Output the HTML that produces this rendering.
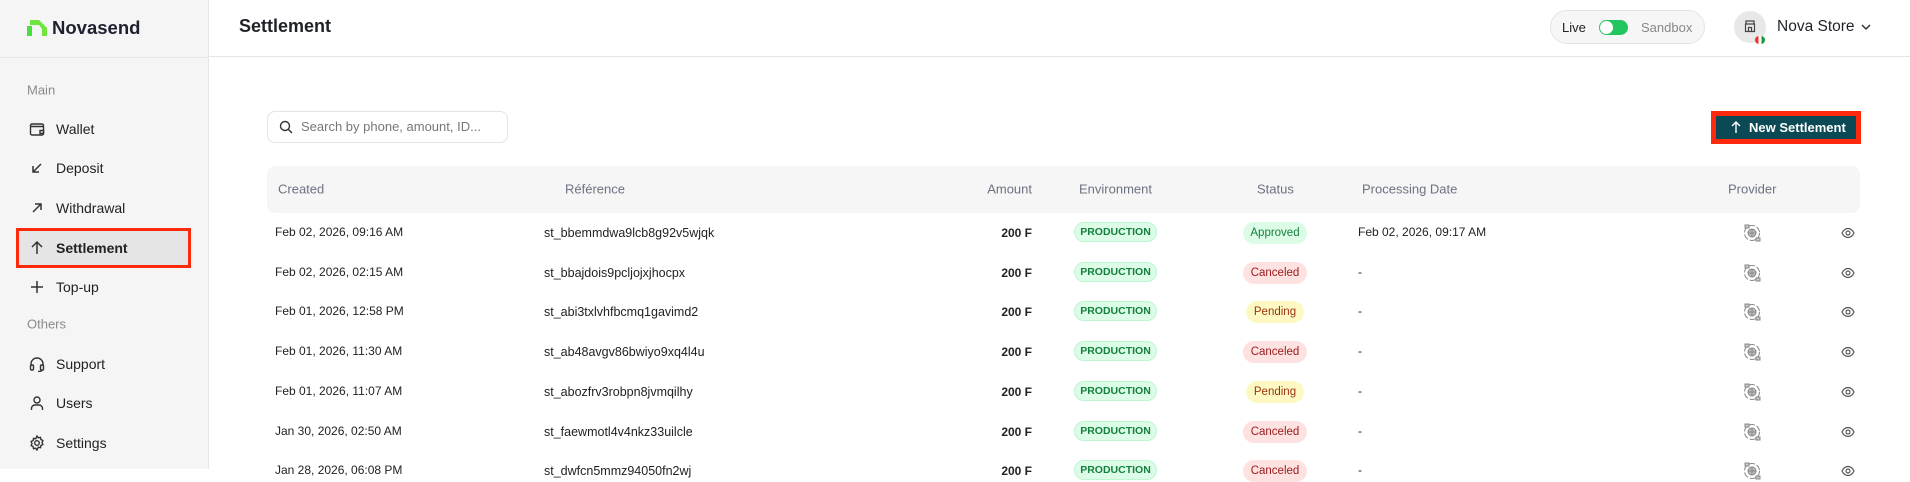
<!DOCTYPE html>
<html><head><meta charset="utf-8"><style>
*{box-sizing:border-box;margin:0;padding:0}
body{width:1910px;height:469px;overflow:hidden;background:#fff;font-family:"Liberation Sans",sans-serif;color:#1f2328;position:relative}
.a{position:absolute;white-space:nowrap}
.side{left:0;top:0;width:209px;height:469px;background:#f5f5f5;border-right:1px solid #e6e6e6}
.hdr{left:209px;top:0;right:0;height:57px;border-bottom:1px solid #e5e5e5;background:#fff}
.hline{left:0;top:57px;width:209px;height:1px;background:#e5e5e5}
.nav{left:56px;font-size:14px;color:#222;transform:translateY(-50%)}
.ico{left:29px;transform:translateY(-50%);width:16px;height:16px}
.sec{left:27px;font-size:13px;color:#8a8a8a;transform:translateY(-50%)}
.th{font-size:13px;color:#6b7280;top:189px;transform:translateY(-50%)}
.td{font-size:12px;color:#222;transform:translateY(-50%)}
.ref{font-size:12.5px}
.amt{font-weight:bold;right:878px;font-size:12px}
.env{left:1074px;width:83px;height:20px;border:1px solid #bbf7d0;background:#dcfce7;color:#15803d;border-radius:10px;font-size:10.5px;font-weight:bold;text-align:center;line-height:18px;transform:translateY(-50%)}
.st{width:64px;height:22px;border-radius:11px;font-size:11.5px;text-align:center;line-height:22px;left:1243px;transform:translateY(-50%)}
.ap{background:#dcfce7;color:#15803d}
.ca{background:#fee2e2;color:#991b1b}
.pe{background:#fef9c3;color:#9a3412;width:58px;left:1246px}
.pv{left:1742px;transform:translateY(-50%)}
.ey{left:1841px;transform:translateY(-50%)}
</style></head><body>
<div class="a side"></div>
<div class="a hline"></div>
<div class="a hdr"></div>
<svg class="a" style="left:27px;top:20px" width="20" height="16" viewBox="0 0 20 16"><path d="M0 6h5V16H0z" fill="#4ade40"/><path d="M3 0h9l8 8v8h-5V9l-3-4H3z" fill="#6ee63a"/></svg>
<div class="a" style="left:52px;top:17px;font-size:18.5px;font-weight:bold;color:#1f2130">Novasend</div>
<div class="a" style="left:239px;top:16px;font-size:18px;font-weight:bold;color:#1f2328">Settlement</div>

<div class="a sec" style="top:90px">Main</div>
<div class="a" style="left:16px;top:228px;width:175px;height:40px;border:3px solid #ff2a0d;background:#e5e5e5"></div>
<svg class="a ico" style="top:129px" viewBox="0 0 16 16" fill="none" stroke="#333" stroke-width="1.4"><rect x="1.5" y="3" width="13" height="11" rx="1.5"/><path d="M1.5 5.5h13M11 9.5h3.5v3H11z"/></svg>
<div class="a nav" style="top:129px">Wallet</div>
<svg class="a ico" style="top:168px" viewBox="0 0 16 16" fill="none" stroke="#333" stroke-width="1.5"><path d="M12 4L4 12M4 6v6h6"/></svg>
<div class="a nav" style="top:168px">Deposit</div>
<svg class="a ico" style="top:208px" viewBox="0 0 16 16" fill="none" stroke="#333" stroke-width="1.5"><path d="M4 12L12 4M6 4h6v6"/></svg>
<div class="a nav" style="top:208px">Withdrawal</div>
<svg class="a ico" style="top:248px" viewBox="0 0 16 16" fill="none" stroke="#333" stroke-width="1.5"><path d="M8 14V2M3 7l5-5 5 5"/></svg>
<div class="a nav" style="top:248px;font-weight:bold">Settlement</div>
<svg class="a ico" style="top:287px" viewBox="0 0 16 16" fill="none" stroke="#333" stroke-width="1.5"><path d="M8 2v12M2 8h12"/></svg>
<div class="a nav" style="top:287px">Top-up</div>
<div class="a sec" style="top:324px">Others</div>
<svg class="a ico" style="top:364px" viewBox="0 0 16 16" fill="none" stroke="#333" stroke-width="1.4"><path d="M2 10V8a6 6 0 0112 0v2"/><rect x="1.5" y="9" width="3" height="5" rx="1"/><rect x="11.5" y="9" width="3" height="5" rx="1"/><path d="M13 14c0 1-2 1.5-4 1.5"/></svg>
<div class="a nav" style="top:364px">Support</div>
<svg class="a ico" style="top:403px" viewBox="0 0 16 16" fill="none" stroke="#333" stroke-width="1.4"><circle cx="8" cy="5" r="3"/><path d="M2.5 15v-1.5A3.5 3.5 0 016 10h4a3.5 3.5 0 013.5 3.5V15"/></svg>
<div class="a nav" style="top:403px">Users</div>
<svg class="a ico" style="top:443px" viewBox="0 0 16 16" fill="none" stroke="#333" stroke-width="1.4"><circle cx="8" cy="8" r="2.3"/><path d="M8 1l1.3 1.8 2.2-.5.4 2.2 2 1-.9 2 .9 2-2 1-.4 2.2-2.2-.5L8 15l-1.3-1.8-2.2.5-.4-2.2-2-1 .9-2-.9-2 2-1 .4-2.2 2.2.5z"/></svg>
<div class="a nav" style="top:443px">Settings</div>

<div class="a" style="left:1550px;top:10px;width:155px;height:34px;border:1px solid #e3e3e3;background:#f6f6f6;border-radius:17px"></div>
<div class="a" style="left:1562px;top:20px;font-size:13px;color:#222">Live</div>
<div class="a" style="left:1599px;top:20px;width:29px;height:15px;border-radius:8px;background:#22c55e"></div>
<div class="a" style="left:1600px;top:21px;width:13px;height:13px;border-radius:50%;background:#fff"></div>
<div class="a" style="left:1641px;top:20px;font-size:13px;color:#888">Sandbox</div>
<div class="a" style="left:1734px;top:11px;width:32px;height:32px;border-radius:50%;background:#e8e8e8"></div>
<svg class="a" style="left:1743px;top:19px" width="14" height="14" viewBox="0 0 14 14" fill="none" stroke="#444" stroke-width="1.2"><path d="M2 5h10M3 5V2h8v3M2.5 5v7.5h9V5M5.5 12.5v-4h3v4"/></svg>
<div class="a" style="left:1755px;top:36px;width:10px;height:8px;border-radius:4px;background:linear-gradient(90deg,#e33 33%,#fff 33% 66%,#1a9a3a 66%)"></div>
<div class="a" style="left:1777px;top:18px;font-size:15.5px;color:#1f2328">Nova Store</div>
<svg class="a" style="left:1861px;top:23px" width="10" height="8" viewBox="0 0 10 8" fill="none" stroke="#333" stroke-width="1.5"><path d="M1 2l4 4 4-4"/></svg>

<div class="a" style="left:267px;top:111px;width:241px;height:32px;border:1px solid #e3e3e3;border-radius:8px"></div>
<svg class="a" style="left:279px;top:120px" width="14" height="14" viewBox="0 0 14 14" fill="none" stroke="#333" stroke-width="1.4"><circle cx="6" cy="6" r="4.5"/><path d="M9.5 9.5L13 13"/></svg>
<div class="a" style="left:301px;top:119px;font-size:13px;color:#777">Search by phone, amount, ID...</div>

<div class="a" style="left:1711px;top:111px;width:150px;height:33px;background:#ff2a0d"></div>
<div class="a" style="left:1716px;top:116px;width:140px;height:23px;background:#0b4a55"></div>
<svg class="a" style="left:1730px;top:121px" width="12" height="13" viewBox="0 0 12 13" fill="none" stroke="#fff" stroke-width="1.4"><path d="M6 12V1M2 5l4-4 4 4"/></svg>
<div class="a" style="left:1749px;top:120px;font-size:13px;font-weight:bold;color:#fff">New Settlement</div>

<div class="a" style="left:267px;top:166px;width:1593px;height:47px;background:#f6f6f6;border-radius:8px"></div>
<div class="a th" style="left:278px">Created</div>
<div class="a th" style="left:565px">Référence</div>
<div class="a th" style="right:878px">Amount</div>
<div class="a th" style="left:1079px">Environment</div>
<div class="a th" style="left:1257px">Status</div>
<div class="a th" style="left:1362px">Processing Date</div>
<div class="a th" style="left:1728px">Provider</div>

<div id="rows"></div>
<script>
var R=[["Feb 02, 2026, 09:16 AM","st_bbemmdwa9lcb8g92v5wjqk","ap","Approved","Feb 02, 2026, 09:17 AM"],
["Feb 02, 2026, 02:15 AM","st_bbajdois9pcljojxjhocpx","ca","Canceled","-"],
["Feb 01, 2026, 12:58 PM","st_abi3txlvhfbcmq1gavimd2","pe","Pending","-"],
["Feb 01, 2026, 11:30 AM","st_ab48avgv86bwiyo9xq4l4u","ca","Canceled","-"],
["Feb 01, 2026, 11:07 AM","st_abozfrv3robpn8jvmqilhy","pe","Pending","-"],
["Jan 30, 2026, 02:50 AM","st_faewmotl4v4nkz33uilcle","ca","Canceled","-"],
["Jan 28, 2026, 06:08 PM","st_dwfcn5mmz94050fn2wj","ca","Canceled","-"]];
var h="";
R.forEach(function(r,i){var y=233+i*39.7;
h+='<div class="a td" style="left:275px;top:'+(y-1)+'px">'+r[0]+'</div>';
h+='<div class="a td ref" style="left:544px;top:'+y+'px">'+r[1]+'</div>';
h+='<div class="a td amt" style="top:'+y+'px">200 F</div>';
h+='<div class="a env" style="top:'+(y-1)+'px">PRODUCTION</div>';
h+='<div class="a st '+r[2]+'" style="top:'+y+'px">'+r[3]+'</div>';
h+='<div class="a td" style="left:1358px;top:'+(y-1)+'px">'+r[4]+'</div>';
h+='<svg class="a pv" style="top:'+y+'px" width="20" height="20" viewBox="0 0 20 20" fill="none" stroke="#888" stroke-width="1"><circle cx="10" cy="10" r="7.5" stroke-dasharray="6 2"/><circle cx="10" cy="10" r="4" fill="#bbb"/><path d="M6 10h8M10 6v8"/><rect x="3" y="2" width="4" height="3" fill="#ccc"/><rect x="14" y="15" width="4" height="3" fill="#ccc"/></svg>';
h+='<svg class="a ey" style="top:'+y+'px" width="14" height="12" viewBox="0 0 14 12" fill="none" stroke="#555" stroke-width="1.2"><path d="M1 6c1.5-3 3.5-4.5 6-4.5S11.5 3 13 6c-1.5 3-3.5 4.5-6 4.5S2.5 9 1 6z"/><circle cx="7" cy="6" r="2"/></svg>';
});
document.getElementById("rows").innerHTML=h;
</script>
</body></html>
